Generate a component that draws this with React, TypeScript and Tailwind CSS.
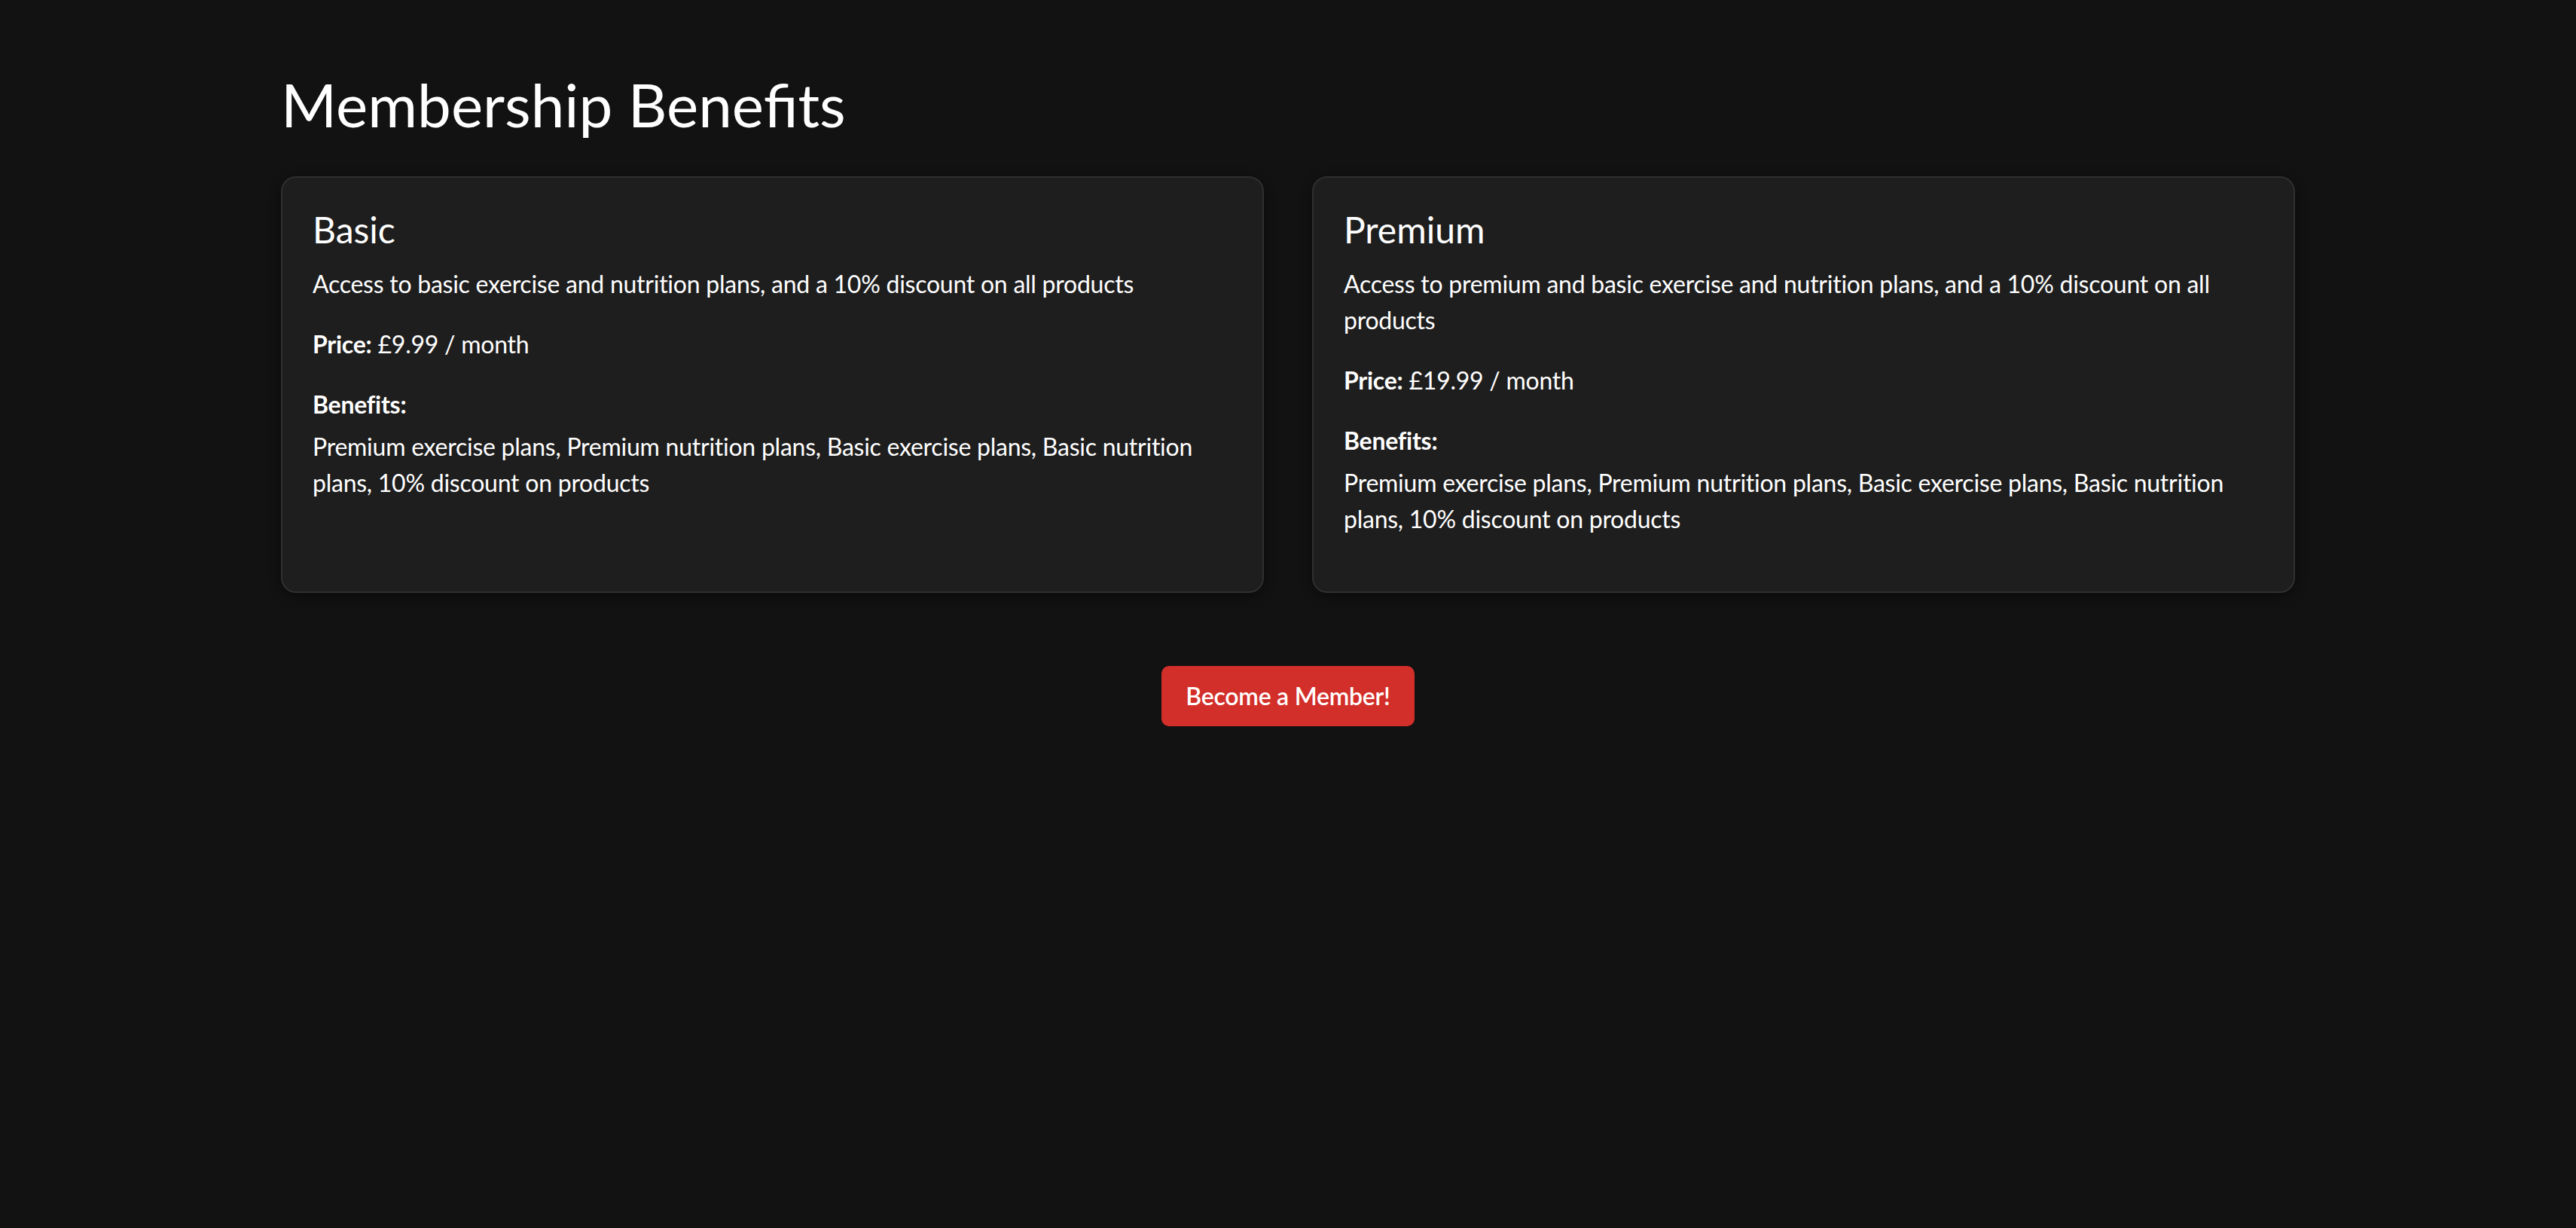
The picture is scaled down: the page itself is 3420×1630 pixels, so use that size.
const plans = [
  {
    name: 'Basic',
    description: 'Access to basic exercise and nutrition plans, and a 10% discount on all products',
    price: '£9.99',
    benefits: 'Premium exercise plans, Premium nutrition plans, Basic exercise plans, Basic nutrition plans, 10% discount on products',
  },
  {
    name: 'Premium',
    description: 'Access to premium and basic exercise and nutrition plans, and a 10% discount on all products',
    price: '£19.99',
    benefits: 'Premium exercise plans, Premium nutrition plans, Basic exercise plans, Basic nutrition plans, 10% discount on products',
  },
]

function PlanCard({ plan }: { plan: (typeof plans)[number] }) {
  return (
    <div className="rounded-[20px] border-2 border-[#2f2f2f] bg-[#1e1e1e] p-10 shadow-[0_4px_16px_rgba(0,0,0,0.45)]">
      <h3 className="mb-[19px] text-[48px] leading-[1.2] font-normal text-white">{plan.name}</h3>
      <div className="text-[32px] leading-[48px] tracking-[-0.25px] text-white">
        <p className="mb-8">{plan.description}</p>
        <p className="mb-8">
          <span className="font-bold">Price:</span> {plan.price} / month
        </p>
        <p className="mb-2 font-bold">Benefits:</p>
        <p className="mb-8">{plan.benefits}</p>
      </div>
    </div>
  )
}

export default function App() {
  return (
    <div
      className="min-h-[1630px] w-full bg-[#121212] pt-[90px]"
      style={{ fontFamily: 'Lato, "Open Sans", sans-serif' }}
    >
      <div className="mx-auto w-[2674px]">
        <h1 className="mb-12 text-[80px] leading-[96px] font-normal text-white">Membership Benefits</h1>
        <div className="grid grid-cols-2 gap-16">
          {plans.map((plan) => (
            <PlanCard key={plan.name} plan={plan} />
          ))}
        </div>
        <div className="mt-[97px] flex justify-center">
          <button className="rounded-[10px] bg-[#d32f2a] px-8 py-4 text-[32px] leading-[48px] font-semibold tracking-[-0.25px] text-white">
            Become a Member!
          </button>
        </div>
      </div>
    </div>
  )
}
